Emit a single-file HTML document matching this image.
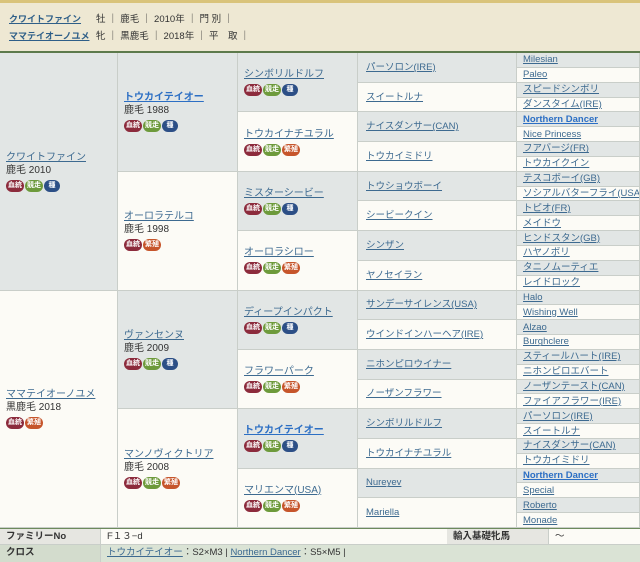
<!DOCTYPE html>
<html><head><meta charset="utf-8"><style>
*{margin:0;padding:0;box-sizing:border-box}
body{width:640px;height:561px;overflow:hidden;background:#fcfbf6;font-family:"Liberation Sans","Noto Sans CJK JP",sans-serif;font-size:10px;color:#333}
a{color:#3d6a90;text-decoration:underline}
a.b{color:#2c6fc4;font-weight:bold}
#hd{position:absolute;left:0;top:0;width:640px;height:53px;background:#eee8d3;border-top:3px solid #d9c37a;border-bottom:2px solid #5d7a4c}
#hd div{position:absolute;left:9px;font-size:9.5px;color:#333;white-space:pre}
#hd a{font-weight:bold;display:inline-block;width:87px;color:#2f5f88;font-size:9px}
#g{position:absolute;left:0;top:53px;width:640px;height:475px;display:grid;grid-template-columns:118px 120px 120px 159px 123px;grid-template-rows:repeat(32,1fr)}
#g>div{border-right:1px solid #c9cec9;border-bottom:1px solid #c9cec9;display:flex;flex-direction:column;justify-content:center;padding-left:6px;line-height:13px;overflow:hidden;white-space:nowrap}
.c5,.c4{font-size:9.5px}
.m{background:#e2e6e5}.f{background:#fcfbf6}
.c1{grid-column:1}.c2{grid-column:2}.c3{grid-column:3}.c4{grid-column:4;padding-left:8px!important}.c5{grid-column:5}
.bd{margin-top:3px;height:12px;display:flex;gap:1px}
.bd i{display:inline-block;height:12px;border-radius:6px;font-style:normal;font-size:7px;line-height:12px;color:#fff;text-align:center;font-weight:bold}
.r{background:#8c2b3c;width:18px}.gr{background:#6d9a3b;width:18px}.bl{background:#2c4f86;width:16px}.o{background:#c6552b;width:18px}
#ft{position:absolute;left:0;top:528px;width:640px;height:33px;border-top:1px solid #6c8a5c;font-size:9.5px}
#ft div{position:absolute;line-height:16px;padding-left:6px;white-space:nowrap}
</style></head><body>
<div id="hd">
<div style="top:8px"><a>クワイトファイン</a>牡 ｜ 鹿毛 ｜ 2010年 ｜ 門 別 ｜</div>
<div style="top:25px"><a>ママテイオーノユメ</a>牝 ｜ 黒鹿毛 ｜ 2018年 ｜ 平　取 ｜</div>
</div>
<div id="g">
<div class="c1 m" style="grid-row:1/17"><a>クワイトファイン</a><span>鹿毛 2010</span><span class="bd"><i class="r">血統</i><i class="gr">競走</i><i class="bl">種</i></span></div>
<div class="c1 f" style="grid-row:17/33"><a>ママテイオーノユメ</a><span>黒鹿毛 2018</span><span class="bd"><i class="r">血統</i><i class="o">繁殖</i></span></div>

<div class="c2 m" style="grid-row:1/9"><a class="b">トウカイテイオー</a><span>鹿毛 1988</span><span class="bd"><i class="r">血統</i><i class="gr">競走</i><i class="bl">種</i></span></div>
<div class="c2 f" style="grid-row:9/17"><a>オーロラテルコ</a><span>鹿毛 1998</span><span class="bd"><i class="r">血統</i><i class="o">繁殖</i></span></div>
<div class="c2 m" style="grid-row:17/25"><a>ヴァンセンヌ</a><span>鹿毛 2009</span><span class="bd"><i class="r">血統</i><i class="gr">競走</i><i class="bl">種</i></span></div>
<div class="c2 f" style="grid-row:25/33"><a>マンノヴィクトリア</a><span>鹿毛 2008</span><span class="bd"><i class="r">血統</i><i class="gr">競走</i><i class="o">繁殖</i></span></div>

<div class="c3 m" style="grid-row:1/5"><a>シンボリルドルフ</a><span class="bd"><i class="r">血統</i><i class="gr">競走</i><i class="bl">種</i></span></div>
<div class="c3 f" style="grid-row:5/9"><a>トウカイナチユラル</a><span class="bd"><i class="r">血統</i><i class="gr">競走</i><i class="o">繁殖</i></span></div>
<div class="c3 m" style="grid-row:9/13"><a>ミスターシービー</a><span class="bd"><i class="r">血統</i><i class="gr">競走</i><i class="bl">種</i></span></div>
<div class="c3 f" style="grid-row:13/17"><a>オーロラシロー</a><span class="bd"><i class="r">血統</i><i class="gr">競走</i><i class="o">繁殖</i></span></div>
<div class="c3 m" style="grid-row:17/21"><a>ディープインパクト</a><span class="bd"><i class="r">血統</i><i class="gr">競走</i><i class="bl">種</i></span></div>
<div class="c3 f" style="grid-row:21/25"><a>フラワーパーク</a><span class="bd"><i class="r">血統</i><i class="gr">競走</i><i class="o">繁殖</i></span></div>
<div class="c3 m" style="grid-row:25/29"><a class="b">トウカイテイオー</a><span class="bd"><i class="r">血統</i><i class="gr">競走</i><i class="bl">種</i></span></div>
<div class="c3 f" style="grid-row:29/33"><a>マリエンマ(USA)</a><span class="bd"><i class="r">血統</i><i class="gr">競走</i><i class="o">繁殖</i></span></div>

<div class="c4 m" style="grid-row:1/3"><a>パーソロン(IRE)</a></div>
<div class="c4 f" style="grid-row:3/5"><a>スイートルナ</a></div>
<div class="c4 m" style="grid-row:5/7"><a>ナイスダンサー(CAN)</a></div>
<div class="c4 f" style="grid-row:7/9"><a>トウカイミドリ</a></div>
<div class="c4 m" style="grid-row:9/11"><a>トウショウボーイ</a></div>
<div class="c4 f" style="grid-row:11/13"><a>シービークイン</a></div>
<div class="c4 m" style="grid-row:13/15"><a>シンザン</a></div>
<div class="c4 f" style="grid-row:15/17"><a>ヤノセイラン</a></div>
<div class="c4 m" style="grid-row:17/19"><a>サンデーサイレンス(USA)</a></div>
<div class="c4 f" style="grid-row:19/21"><a>ウインドインハーヘア(IRE)</a></div>
<div class="c4 m" style="grid-row:21/23"><a>ニホンピロウイナー</a></div>
<div class="c4 f" style="grid-row:23/25"><a>ノーザンフラワー</a></div>
<div class="c4 m" style="grid-row:25/27"><a>シンボリルドルフ</a></div>
<div class="c4 f" style="grid-row:27/29"><a>トウカイナチユラル</a></div>
<div class="c4 m" style="grid-row:29/31"><a>Nureyev</a></div>
<div class="c4 f" style="grid-row:31/33"><a>Mariella</a></div>

<div class="c5 m"><a>Milesian</a></div><div class="c5 f"><a>Paleo</a></div>
<div class="c5 m"><a>スピードシンボリ</a></div><div class="c5 f"><a>ダンスタイム(IRE)</a></div>
<div class="c5 m"><a class="b">Northern Dancer</a></div><div class="c5 f"><a>Nice Princess</a></div>
<div class="c5 m"><a>フアバージ(FR)</a></div><div class="c5 f"><a>トウカイクイン</a></div>
<div class="c5 m"><a>テスコボーイ(GB)</a></div><div class="c5 f"><a>ソシアルバターフライ(USA)</a></div>
<div class="c5 m"><a>トピオ(FR)</a></div><div class="c5 f"><a>メイドウ</a></div>
<div class="c5 m"><a>ヒンドスタン(GB)</a></div><div class="c5 f"><a>ハヤノボリ</a></div>
<div class="c5 m"><a>タニノムーティエ</a></div><div class="c5 f"><a>レイドロック</a></div>
<div class="c5 m"><a>Halo</a></div><div class="c5 f"><a>Wishing Well</a></div>
<div class="c5 m"><a>Alzao</a></div><div class="c5 f"><a>Burghclere</a></div>
<div class="c5 m"><a>スティールハート(IRE)</a></div><div class="c5 f"><a>ニホンピロエバート</a></div>
<div class="c5 m"><a>ノーザンテースト(CAN)</a></div><div class="c5 f"><a>ファイアフラワー(IRE)</a></div>
<div class="c5 m"><a>パーソロン(IRE)</a></div><div class="c5 f"><a>スイートルナ</a></div>
<div class="c5 m"><a>ナイスダンサー(CAN)</a></div><div class="c5 f"><a>トウカイミドリ</a></div>
<div class="c5 m"><a class="b">Northern Dancer</a></div><div class="c5 f"><a>Special</a></div>
<div class="c5 m"><a>Roberto</a></div><div class="c5 f"><a>Monade</a></div>
</div>
<div id="ft">
<div style="left:0;top:0;width:100px;height:16px;background:#e6e6e1;font-weight:bold;border-bottom:1px solid #c9cec9">ファミリーNo</div>
<div style="left:100px;top:0;width:347px;height:16px;background:#fcfbf6;border-left:1px solid #c9cec9;border-bottom:1px solid #c9cec9">F１３−d</div>
<div style="left:447px;top:0;width:101px;height:16px;background:#e6e6e1;font-weight:bold;border-bottom:1px solid #c9cec9">輸入基礎牝馬</div>
<div style="left:548px;top:0;width:92px;height:16px;background:#fcfbf6;border-left:1px solid #c9cec9;border-bottom:1px solid #c9cec9">〜</div>
<div style="left:0;top:16px;width:100px;height:17px;background:#d3dccd;font-weight:bold">クロス</div>
<div style="left:100px;top:16px;width:540px;height:17px;background:#dae3d5;border-left:1px solid #c9cec9"><a>トウカイテイオー</a>：S2×M3 | <a>Northern Dancer</a>：S5×M5 |</div>
</div>
</body></html>
